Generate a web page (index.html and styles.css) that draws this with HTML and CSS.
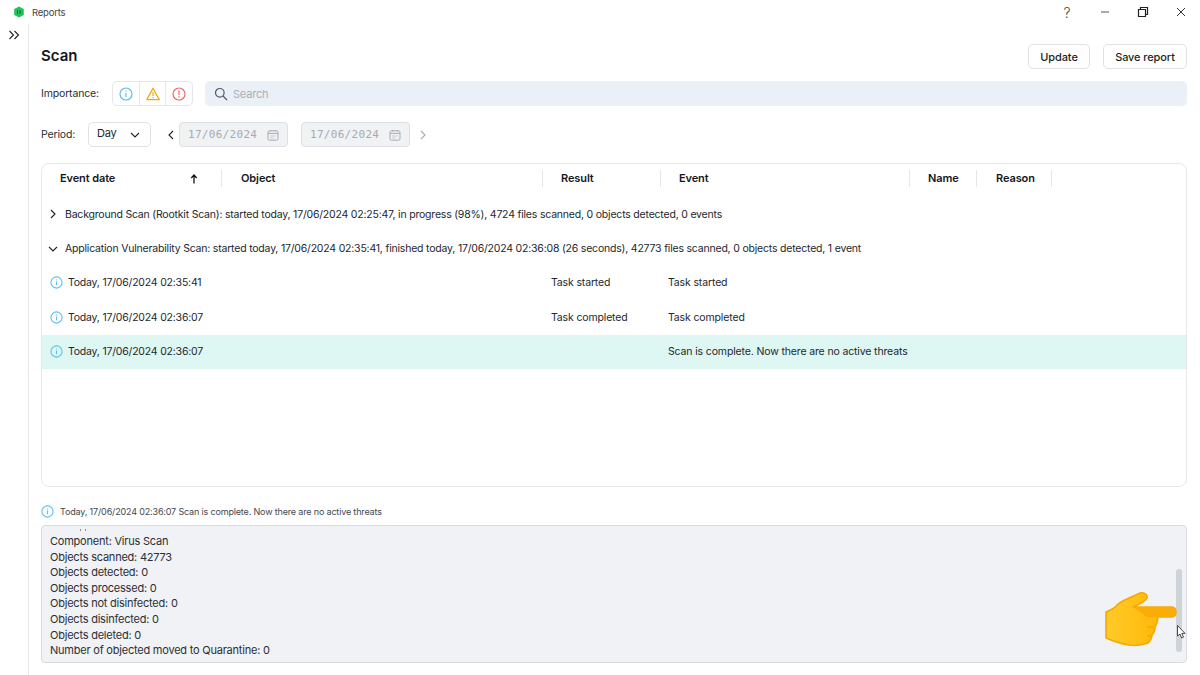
FILE: index.html
```html
<!DOCTYPE html>
<html lang="en">
<head>
<meta charset="utf-8">
<title>Reports</title>
<link rel="stylesheet" href="styles.css">
</head>
<body>
<header class="titlebar">
  <svg class="logo" viewBox="0 0 12 12" width="12" height="12"><path d="M6 .5 10.8 3v6L6 11.5 1.2 9V3z" fill="#23c25d"/><path d="M4.5 4v4M7 4v4M7 6h1.2" stroke="#0b6a35" stroke-width=".9" fill="none"/></svg>
  <span class="app-name">Reports</span>
  <div class="win-controls">
    <span class="help">?</span>
    <svg width="12" height="12" viewBox="0 0 12 12"><path d="M2 6h8" stroke="#555" fill="none"/></svg>
    <svg width="12" height="12" viewBox="0 0 12 12"><path d="M3.5 3V1.5h7v7H9M1.5 3.5h7v7h-7z" stroke="#222" stroke-width="1.2" fill="none"/></svg>
    <svg width="12" height="12" viewBox="0 0 12 12"><path d="M2 2l8 8M10 2l-8 8" stroke="#333" fill="none"/></svg>
  </div>
</header>
<div class="shell">
  <aside class="rail">
    <svg width="12" height="10" viewBox="0 0 12 10"><path d="M1.5 1l4 4-4 4M6.5 1l4 4-4 4" stroke="#222" stroke-width="1.1" fill="none"/></svg>
  </aside>
  <main class="main">
    <div class="head-row">
      <h1>Scan</h1>
      <div class="actions">
        <button class="btn btn-update">Update</button>
        <button class="btn btn-save">Save report</button>
      </div>
    </div>
    <div class="filter-row">
      <span class="label label-imp">Importance:</span>
      <div class="severity">
        <span class="sev"><svg width="14" height="14" viewBox="0 0 14 14"><circle cx="7" cy="7" r="6" stroke="#5cc0ef" stroke-width="1.2" fill="none"/><path d="M7 6v4M7 3.7v1.1" stroke="#5cc0ef" stroke-width="1.2"/></svg></span>
        <span class="sev"><svg width="14" height="14" viewBox="0 0 14 14"><path d="M7 1.2 13.2 12.6H.8z" stroke="#f5a60f" stroke-width="1.3" fill="none" stroke-linejoin="round"/><path d="M7 5v4M7 10v1.2" stroke="#f5a60f" stroke-width="1.2"/></svg></span>
        <span class="sev"><svg width="14" height="14" viewBox="0 0 14 14"><circle cx="7" cy="7" r="6" stroke="#ee6a6a" stroke-width="1.2" fill="none"/><path d="M7 3.5v4.5M7 9.2v1.2" stroke="#ee6a6a" stroke-width="1.2"/></svg></span>
      </div>
      <div class="search">
        <svg width="14" height="14" viewBox="0 0 14 14"><circle cx="5.8" cy="5.8" r="4.3" stroke="#555c66" stroke-width="1.2" fill="none"/><path d="M9 9l4 4" stroke="#555c66" stroke-width="1.2"/></svg>
        <span>Search</span>
      </div>
    </div>
    <div class="period-row">
      <span class="label label-per">Period:</span>
      <div class="select"><span class="select-value">Day</span><svg width="10" height="6" viewBox="0 0 10 6"><path d="M1 1l4 4 4-4" stroke="#222" stroke-width="1.1" fill="none"/></svg></div>
      <svg class="nav-prev" width="6" height="10" viewBox="0 0 6 10"><path d="M5 1 1 5l4 4" stroke="#222" stroke-width="1.1" fill="none"/></svg>
      <div class="date"><span>17/06/2024</span><svg width="12" height="12" viewBox="0 0 12 12"><rect x="1" y="1.8" width="10" height="9.4" rx="1.5" stroke="#a5abb3" fill="none"/><path d="M1 4.4h10M3.5 1v1.5M8.5 1v1.5M3.5 7h1M5.5 7h1M7.5 7h1M3.5 9h1M5.5 9h1" stroke="#a5abb3"/></svg></div>
      <div class="date date-to"><span>17/06/2024</span><svg width="12" height="12" viewBox="0 0 12 12"><rect x="1" y="1.8" width="10" height="9.4" rx="1.5" stroke="#a5abb3" fill="none"/><path d="M1 4.4h10M3.5 1v1.5M8.5 1v1.5M3.5 7h1M5.5 7h1M7.5 7h1M3.5 9h1M5.5 9h1" stroke="#a5abb3"/></svg></div>
      <svg class="nav-next" width="6" height="10" viewBox="0 0 6 10"><path d="M1 1l4 4-4 4" stroke="#a5abb3" stroke-width="1.1" fill="none"/></svg>
    </div>
    <section class="table">
      <div class="thead">
        <div class="th c-date"><span>Event date</span><svg class="sort" width="8" height="10" viewBox="0 0 8 10"><path d="M4 9.5V1.5M1.3 4 4 1l2.7 3" stroke="#111" stroke-width="1.3" fill="none"/></svg></div>
        <div class="th c-obj"><span>Object</span></div>
        <div class="th c-res"><span>Result</span></div>
        <div class="th c-evt"><span>Event</span></div>
        <div class="th c-name"><span>Name</span></div>
        <div class="th c-reason"><span>Reason</span></div>
      </div>
      <div class="row group">
        <svg width="10" height="10" viewBox="0 0 10 10"><path d="M3 1l4 4-4 4" stroke="#222" stroke-width="1.1" fill="none"/></svg>
        <span>Background Scan (Rootkit Scan): started today, 17/06/2024 02:25:47, in progress (98%), 4724 files scanned, 0 objects detected, 0 events</span>
      </div>
      <div class="row group">
        <svg width="10" height="10" viewBox="0 0 10 10"><path d="M1 3l4 4 4-4" stroke="#222" stroke-width="1.1" fill="none"/></svg>
        <span>Application Vulnerability Scan: started today, 17/06/2024 02:35:41, finished today, 17/06/2024 02:36:08 (26 seconds), 42773 files scanned, 0 objects detected, 1 event</span>
      </div>
      <div class="row event">
        <div class="cell-date"><svg width="13" height="13" viewBox="0 0 14 14"><circle cx="7" cy="7" r="6" stroke="#5cc0ef" stroke-width="1.2" fill="none"/><path d="M7 6v4M7 3.7v1.1" stroke="#5cc0ef" stroke-width="1.2"/></svg><span>Today, 17/06/2024 02:35:41</span></div>
        <div class="cell-res">Task started</div><div class="cell-evt">Task started</div>
      </div>
      <div class="row event">
        <div class="cell-date"><svg width="13" height="13" viewBox="0 0 14 14"><circle cx="7" cy="7" r="6" stroke="#5cc0ef" stroke-width="1.2" fill="none"/><path d="M7 6v4M7 3.7v1.1" stroke="#5cc0ef" stroke-width="1.2"/></svg><span>Today, 17/06/2024 02:36:07</span></div>
        <div class="cell-res">Task completed</div><div class="cell-evt">Task completed</div>
      </div>
      <div class="row event selected">
        <div class="cell-date"><svg width="13" height="13" viewBox="0 0 14 14"><circle cx="7" cy="7" r="6" stroke="#5cc0ef" stroke-width="1.2" fill="none"/><path d="M7 6v4M7 3.7v1.1" stroke="#5cc0ef" stroke-width="1.2"/></svg><span>Today, 17/06/2024 02:36:07</span></div>
        <div class="cell-res"></div><div class="cell-evt">Scan is complete. Now there are no active threats</div>
      </div>
    </section>
    <div class="summary">
      <svg width="13" height="13" viewBox="0 0 14 14"><circle cx="7" cy="7" r="6" stroke="#5cc0ef" stroke-width="1.2" fill="none"/><path d="M7 6v4M7 3.7v1.1" stroke="#5cc0ef" stroke-width="1.2"/></svg>
      <span>Today, 17/06/2024 02:36:07 Scan is complete. Now there are no active threats</span>
    </div>
    <section class="details">
      <div class="scrolled-marks"></div>
      <div class="details-text">
        <p>Component: Virus Scan</p>
        <p>Objects scanned: 42773</p>
        <p>Objects detected: 0</p>
        <p>Objects processed: 0</p>
        <p>Objects not disinfected: 0</p>
        <p>Objects disinfected: 0</p>
        <p>Objects deleted: 0</p>
        <p>Number of objected moved to Quarantine: 0</p>
      </div>
      <div class="scrollbar"></div>
      <svg class="hand" width="72" height="56" viewBox="0 0 72 56">
        <defs><linearGradient id="handfill" x1="0" x2="1" y1="0" y2="0"><stop offset="0" stop-color="#ffca28"/><stop offset="1" stop-color="#ffb300"/></linearGradient></defs>
        <path d="M1 21C6 19 10 17 13 13 18 9 26 6 33 3 38 0 43 3 42 7 41 10 35 13 28 16H66C69 16 71 18 71 21 71 24 69 26 66 26H53C53 30 52 33 50 36 50 39 49 42 47 44 47 47 45 50 43 52 38 54 31 55 24 54 16 53 8 50 1 47z" fill="url(#handfill)" stroke="#f7a900" stroke-width="1.6" stroke-linejoin="round"/>
        <path d="M28 16H66C69 16 71 18 71 21 71 24 69 26 66 26H42z" fill="#f9ad06"/>
        <path d="M42 36H50M42 45H47" stroke="#f7a900" stroke-width="1.6" fill="none"/>
      </svg>
      <svg class="cursor" width="9" height="14" viewBox="0 0 9 14"><path d="M.5.5v10.5l2.5-2 1.7 4 1.8-.8-1.7-3.8h3.2z" fill="#fff" stroke="#222" stroke-width=".8"/></svg>
    </section>
  </main>
</div>
</body>
</html>
```
FILE: styles.css
```css
* { box-sizing: border-box; }
html, body { margin: 0; height: 100%; }
body { width: 1200px; height: 675px; overflow: hidden; background: #fff; color: #23272d; font-family: Inter, "Liberation Sans", sans-serif; font-size: 10.5px; letter-spacing: -.2px; }
.titlebar { height: 24px; display: flex; align-items: center; padding-left: 13px; }
.logo { margin-right: 7px; }
.app-name { font-size: 9.5px; color: #444; }
.win-controls { margin-left: auto; display: flex; align-items: center; gap: 26px; padding-right: 13px; }
.help { font-size: 14px; color: #444; width: 12px; text-align: center; font-weight: 300; }
.shell { display: flex; height: 651px; }
.rail { width: 29px; border-right: 1px solid #e6e8ec; padding: 6px 0 0 8px; }
.main { flex: 1; padding: 20px 13px 0 12px; }
.head-row { display: flex; align-items: center; justify-content: space-between; height: 25px; }
h1 { margin: 0 0 2px; font-size: 15px; font-weight: 600; color: #14171a; letter-spacing: 0; }
.actions { display: flex; gap: 13px; }
.btn { height: 25px; background: #fff; border: 1px solid #dfe2e7; border-radius: 5px; font: 500 11px Inter, sans-serif; color: #1c1f24; padding: 0; letter-spacing: -.1px; }
.btn-update { width: 62px; }
.btn-save { width: 84px; }
.filter-row { display: flex; align-items: center; margin-top: 12px; height: 25px; }
.label { color: #2a2e34; letter-spacing: -.15px; }
.label-imp { width: 71px; }
.severity { display: flex; border: 1px solid #e3e6ea; border-radius: 5px; height: 25px; width: 81px; }
.sev { flex: 1; display: flex; align-items: center; justify-content: center; border-left: 1px solid #e3e6ea; }
.sev:first-child { border-left: 0; }
.search { flex: 1; margin-left: 12px; height: 25px; border-radius: 5px; background: #ebeff6; display: flex; align-items: center; gap: 5px; padding-left: 9px; color: #a9afb8; font-size: 11px; }
.period-row { display: flex; align-items: center; margin-top: 16px; height: 25px; }
.label-per { width: 47px; }
.select { width: 63px; height: 25px; border: 1px solid #dfe2e7; border-radius: 5px; display: flex; align-items: center; justify-content: space-between; padding: 0 10px 0 8px; }
.select-value { margin-bottom: 3px; font-size: 11px; }
.nav-prev { margin: 0 5px 0 17px; }
.date { width: 109px; height: 25px; border: 1px solid #dcdfe3; border-radius: 4px; background: #f0f2f4; display: flex; align-items: center; justify-content: space-between; padding: 0 8px; font-family: "DejaVu Sans Mono", monospace; font-size: 11px; letter-spacing: .3px; color: #a5abb3; }
.date-to { margin-left: 13px; }
.nav-next { margin-left: 10px; }
.table { margin-top: 16px; height: 324px; border: 1px solid #e6e8ec; border-radius: 8px; overflow: hidden; }
.thead { display: flex; height: 33px; font-weight: 600; font-size: 11px; letter-spacing: -.1px; color: #15181c; align-items: flex-start; padding-top: 6px; }
.th { height: 17px; display: flex; align-items: center; border-right: 1px solid #e3e6ea; padding-left: 18px; }
.th > span { margin-bottom: 2px; }
.c-date { width: 180px; justify-content: space-between; padding-right: 23px; }
.c-obj { width: 321px; padding-left: 19px; }
.c-res { width: 118px; }
.c-evt { width: 249px; }
.c-name { width: 67px; }
.c-reason { width: 75px; padding-left: 19px; }
.row { height: 34.4px; display: flex; align-items: center; padding-left: 6px; }
.group { gap: 7px; }
.event { padding-left: 8px; }
.cell-date { display: flex; align-items: center; gap: 5px; width: 500px; }
.cell-res { width: 118px; padding-left: 1px; letter-spacing: -.15px; }
.cell-evt { letter-spacing: -.14px; }
.selected { background: #def7f2; }
.summary { display: flex; align-items: center; gap: 6px; height: 20px; margin-top: 14px; font-size: 9px; letter-spacing: -.16px; color: #43484f; }
.details { position: relative; height: 138px; margin-top: 4px; background: #f0f2f5; border: 1px solid #d8dbe0; border-radius: 4px; padding: 8px 8px 0; overflow: hidden; }
.details p { margin: 0; height: 15.6px; line-height: 15.6px; font-size: 11px; letter-spacing: -.22px; color: #2b2f35; }
.scrolled-marks { position: absolute; left: 38px; top: 3px; width: 1px; height: 2px; background: #8b8f96; box-shadow: 5px 0 #8b8f96; }
.scrollbar { position: absolute; right: 4px; top: 43px; width: 6px; height: 83px; background: #ced2d9; border-radius: 3px; }
.hand { position: absolute; left: 1063px; top: 65px; }
.cursor { position: absolute; right: 0; top: 99px; }
```
